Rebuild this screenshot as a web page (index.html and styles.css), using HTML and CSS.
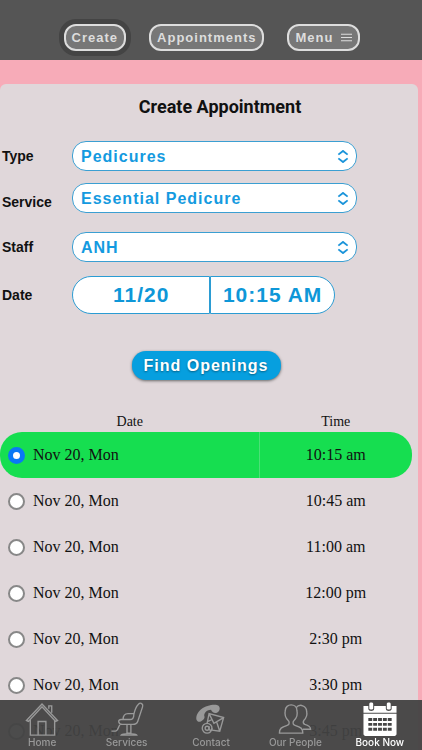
FILE: index.html
```html
<!DOCTYPE html>
<html lang="en">
<head>
  <meta charset="UTF-8">
  <meta name="viewport" content="width=device-width, initial-scale=1.0">
  <title>Create Appointment</title>
  <link rel="stylesheet" href="styles.css">
</head>
<body>
  <header class="topbar">
    <button type="button" class="pill active">Create</button>
    <button type="button" class="pill">Appointments</button>
    <button type="button" class="pill">Menu
      <svg class="bars" viewBox="0 0 10 10"><path d="M0 2h10M0 5h10M0 8h10"/></svg>
    </button>
  </header>

  <main class="content">
    <form class="panel">
      <h1>Create Appointment</h1>

      <div class="fields">
        <div class="row">
          <label for="type">Type</label>
          <div class="select">
            <select id="type"><option>Pedicures</option></select>
            <svg viewBox="0 0 12 14"><path d="M1 5l5-4 5 4M1 9l5 4 5-4"/></svg>
          </div>
        </div>
        <div class="row service">
          <label for="service">Service</label>
          <div class="select">
            <select id="service"><option>Essential Pedicure</option></select>
            <svg viewBox="0 0 12 14"><path d="M1 5l5-4 5 4M1 9l5 4 5-4"/></svg>
          </div>
        </div>
        <div class="row">
          <label for="staff">Staff</label>
          <div class="select">
            <select id="staff"><option>ANH</option></select>
            <svg viewBox="0 0 12 14"><path d="M1 5l5-4 5 4M1 9l5 4 5-4"/></svg>
          </div>
        </div>
        <div class="row when">
          <label for="date">Date</label>
          <input type="text" id="date" class="date" value="11/20">
          <input type="text" class="time" value="10:15 AM" aria-label="Time">
        </div>
      </div>

      <button type="button" class="find">Find Openings</button>

      <table class="openings">
        <thead>
          <tr><th>Date</th><th>Time</th></tr>
        </thead>
        <tbody>
          <tr class="selected"><td><label><input type="radio" name="slot" checked>Nov 20, Mon</label></td><td>10:15 am</td></tr>
          <tr><td><label><input type="radio" name="slot">Nov 20, Mon</label></td><td>10:45 am</td></tr>
          <tr><td><label><input type="radio" name="slot">Nov 20, Mon</label></td><td>11:00 am</td></tr>
          <tr><td><label><input type="radio" name="slot">Nov 20, Mon</label></td><td>12:00 pm</td></tr>
          <tr><td><label><input type="radio" name="slot">Nov 20, Mon</label></td><td>2:30 pm</td></tr>
          <tr><td><label><input type="radio" name="slot">Nov 20, Mon</label></td><td>3:30 pm</td></tr>
          <tr><td><label><input type="radio" name="slot">Nov 20, Mon</label></td><td>3:45 pm</td></tr>
        </tbody>
      </table>
    </form>
  </main>

  <nav class="tabs">
    <a href="#home">
      <svg viewBox="0 0 36 36">
        <path d="M2 19L18 2l16 17-2 1L18 5 4 20zM6 18v16h25V18M14 34V20h8v14M25 7V4h3v7"/>
      </svg>
      Home
    </a>
    <a href="#services">
      <svg viewBox="0 0 36 36">
        <path d="M30 2c2-2 5 0 4 3l-5 15c-1 3-3 3-5 3H13c-4 0-5-5-1-5h9c3 0 4-2 4-5 1-5 2-8 5-11zM14 18c0-4 2-6 5-6h6M11 23c-2 2-2 7-5 7H2M18 23v9h4v-9M12 34c1-2 15-2 16 0z"/>
      </svg>
      Services
    </a>
    <a href="#contact">
      <svg viewBox="0 0 36 36">
        <path class="fill" d="M9 19c-2 2-5 2-6-1C2 9 13 2 24 3c4 1 4 6 0 8-3 1-5-1-6-3-4 0-7 3-7 6 1 2 0 4-2 5z"/>
        <path class="thick" d="M14 22l2-10 15 4-4 14-8-1M16 12l5 10 10-6M27 30l-3-9M15 20l4-2"/>
        <circle class="thick" cx="14" cy="27" r="5"/>
        <circle class="thick" cx="14" cy="27" r="2"/>
        <path class="thick" d="M16 25v3c1 2 3 1 3-1"/>
      </svg>
      Contact
    </a>
    <a href="#people">
      <svg viewBox="0 0 36 36">
        <path d="M2 32c0-5 2-6 8-8 3-1 2-4 1-5-3-3-4-6-3-10 0-8 12-8 12 0 1 4 0 7-3 10-1 1-2 4 1 5 6 2 8 3 8 8zM19 6c4-5 11-2 11 4 1 4 0 6-3 9-1 2-1 3 1 4 4 1 6 2 6 5h-8"/>
      </svg>
      Our People
    </a>
    <a href="#book" class="current">
      <svg viewBox="0 0 36 36">
        <path class="fill" d="M1 4h5v3c0 3 6 3 6 0V4h12v3c0 3 6 3 6 0V4h5v7H1zM7 2c0-2 4-2 4 0v5c0 1-4 1-4 0zM25 2c0-2 4-2 4 0v5c0 1-4 1-4 0zM1 12h34v21c0 1-1 2-2 2H3c-1 0-2-1-2-2z"/>
        <path class="cells" d="M6 18h24M6 23h24M6 28h24"/>
      </svg>
      Book Now
    </a>
  </nav>
</body>
</html>
```
FILE: styles.css
```css
* { box-sizing: border-box; margin: 0; padding: 0; }
body {
  height: 100vh;
  display: flex;
  flex-direction: column;
  overflow: hidden;
  background: #f7abb8;
  color: #111;
  font-family: "Liberation Sans", Arial, sans-serif;
}

.topbar {
  flex: none;
  display: flex;
  justify-content: center;
  gap: 23px;
  height: 60px;
  padding: 24px 0 0 2px;
  background: #555;
}
.pill {
  display: flex;
  align-items: center;
  gap: 8px;
  height: 27px;
  padding: 0 6px;
  border: 2px solid #ddd;
  border-radius: 12px;
  background: #777;
  color: #ddd;
  font: bold 13px "Liberation Sans", Arial, sans-serif;
  letter-spacing: 1px;
}
.pill.active { box-shadow: 0 0 0 5px #444; }
.bars { width: 11px; height: 11px; fill: none; stroke: #ddd; stroke-width: 1; }

.content {
  flex: 1;
  min-height: 0;
  padding: 24px 4px 0 0;
  overflow-y: auto;
  scrollbar-width: none;
}
.panel {
  padding: 11px 6px 60px 0;
  border-radius: 6px;
  background: #e0d7da;
}
h1 {
  padding-left: 28px;
  font: bold 18px/24px Roboto, "Liberation Sans", sans-serif;
  text-align: center;
}

.fields {
  display: flex;
  flex-direction: column;
  gap: 12px;
  padding: 22px 55px 0 2px;
}
.row { display: flex; align-items: center; }
.row label { flex: none; width: 70px; font-size: 14px; font-weight: bold; }
.service { height: 37px; }
.service .select { align-self: flex-start; }
.select { position: relative; flex: 1; }
.select select {
  display: block;
  width: 100%;
  height: 30px;
  padding: 0 30px 0 8px;
  appearance: none;
  border: 1px solid #3b9fd2;
  border-radius: 14px;
  background: #fff;
  color: #149ae0;
  font: bold 16px "Liberation Sans", Arial, sans-serif;
  letter-spacing: 1px;
}
.select svg {
  position: absolute;
  top: 9px;
  right: 8px;
  width: 12px;
  height: 13px;
  fill: none;
  stroke: #1b94da;
  stroke-width: 2;
  pointer-events: none;
}
.when { padding: 2px 22px 0 0; }
.when input {
  min-width: 0;
  height: 38px;
  border: 1px solid #2b9cd3;
  color: #0e97d8;
  background: #fff;
  font: bold 21px "Liberation Sans", Arial, sans-serif;
  letter-spacing: 1px;
  text-align: center;
}
.when .date { flex: 10; border-radius: 19px 0 0 19px; }
.when .time { flex: 9; border-radius: 0 19px 19px 0; }

.find {
  display: block;
  height: 29px;
  margin: 37px auto 32px;
  padding: 0 12px;
  border: none;
  border-radius: 14px;
  background: #069fdf;
  box-shadow: 0 1px 3px #666;
  color: #fff;
  font: bold 16px "Liberation Sans", Arial, sans-serif;
  letter-spacing: 1px;
  text-shadow: 0 1px 2px rgba(0, 0, 0, 0.4);
}

.openings {
  width: 100%;
  border-spacing: 0;
  table-layout: fixed;
  font-family: Georgia, "Liberation Serif", serif;
  font-size: 16px;
}
th { height: 20px; font-size: 14px; font-weight: normal; }
th:first-child { width: 63%; }
td { height: 46px; text-align: center; }
td label { display: flex; align-items: center; gap: 8px; padding-left: 8px; }
td input {
  width: 17px;
  height: 17px;
  appearance: none;
  border: 2px solid #888;
  border-radius: 50%;
  background: #fff;
}
td input:checked { border: 5px solid #0a78f5; }
.selected td { background: #16de50; }
.selected td:first-child { border-right: 1px solid #4be077; border-radius: 22px 0 0 22px; }
.selected td:last-child { border-radius: 0 22px 22px 0; }

.tabs {
  position: fixed;
  left: 0;
  right: 0;
  bottom: 0;
  display: flex;
  height: 50px;
  padding-top: 2px;
  background: rgba(66, 66, 66, 0.95);
}
.tabs a {
  flex: 1;
  display: flex;
  flex-direction: column;
  align-items: center;
  color: #999;
  font: 500 10px/11px Inter, "Liberation Sans", sans-serif;
  text-decoration: none;
  white-space: nowrap;
}
.tabs svg { width: 36px; height: 35px; fill: none; stroke: #999; stroke-width: 1.4; overflow: visible; }
.tabs .fill { fill: #999; stroke: none; }
.tabs .current { color: #fff; }
.tabs .current .fill { fill: #fff; }
.tabs .cells { stroke: #444; stroke-width: 3; stroke-dasharray: 4 1; }
```
